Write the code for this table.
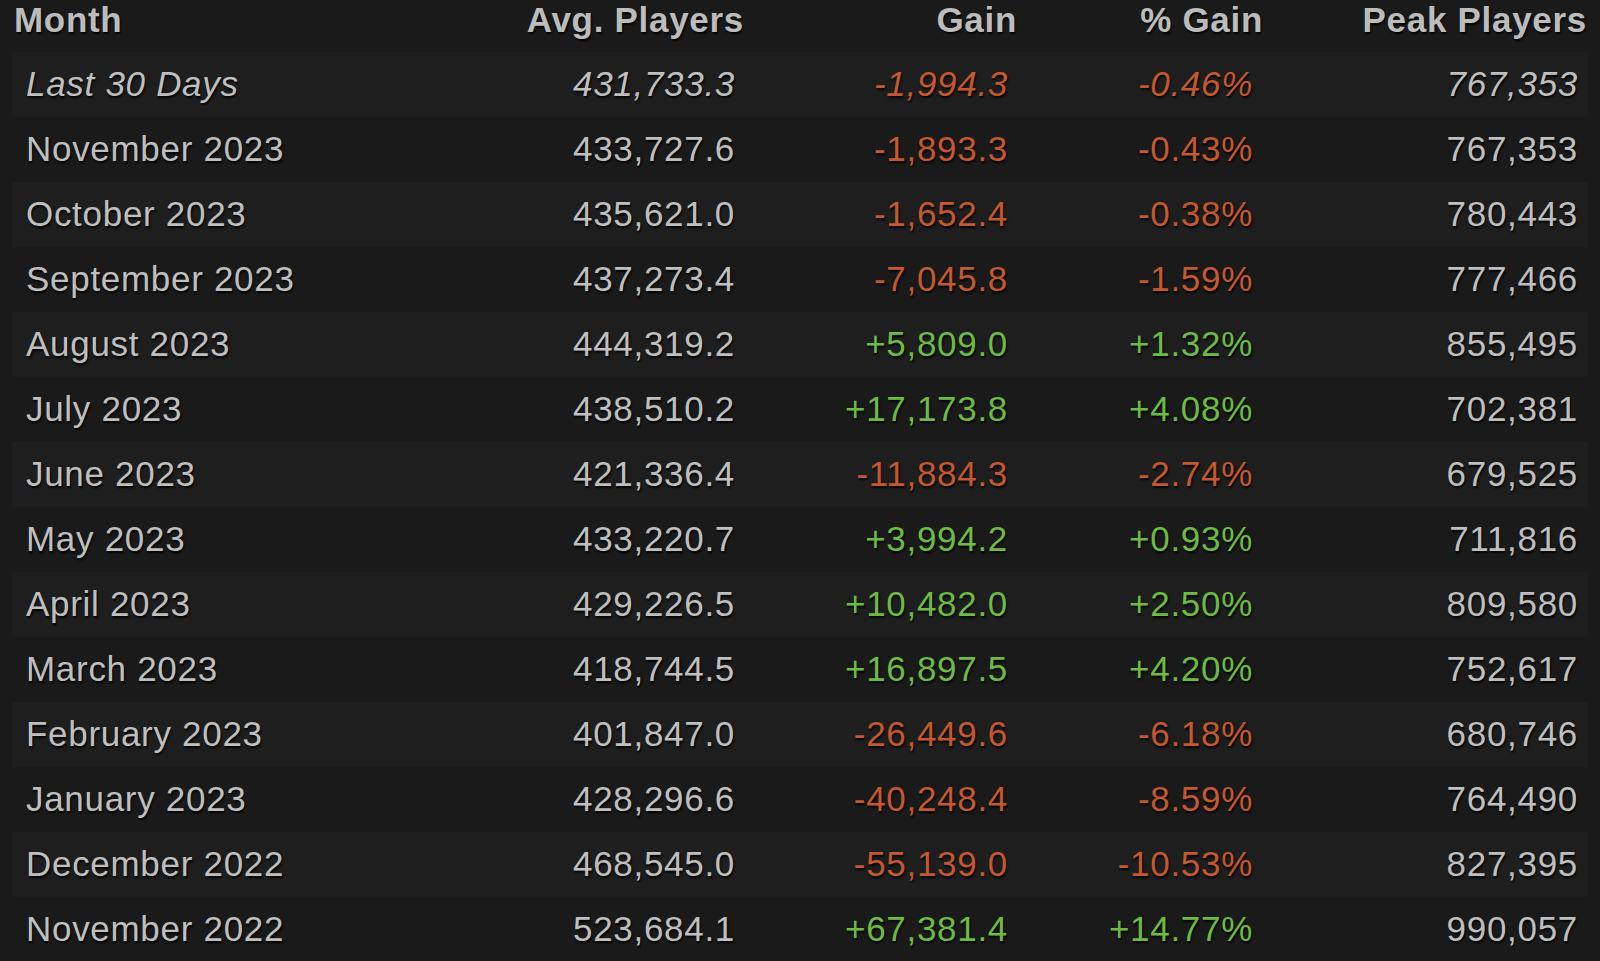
import React from 'react';

type Row = {
  month: string;
  avg: string;
  gain: string;
  pct: string;
  peak: string;
};

const rows: Row[] = [
  { month: 'Last 30 Days', avg: '431,733.3', gain: '-1,994.3', pct: '-0.46%', peak: '767,353' },
  { month: 'November 2023', avg: '433,727.6', gain: '-1,893.3', pct: '-0.43%', peak: '767,353' },
  { month: 'October 2023', avg: '435,621.0', gain: '-1,652.4', pct: '-0.38%', peak: '780,443' },
  { month: 'September 2023', avg: '437,273.4', gain: '-7,045.8', pct: '-1.59%', peak: '777,466' },
  { month: 'August 2023', avg: '444,319.2', gain: '+5,809.0', pct: '+1.32%', peak: '855,495' },
  { month: 'July 2023', avg: '438,510.2', gain: '+17,173.8', pct: '+4.08%', peak: '702,381' },
  { month: 'June 2023', avg: '421,336.4', gain: '-11,884.3', pct: '-2.74%', peak: '679,525' },
  { month: 'May 2023', avg: '433,220.7', gain: '+3,994.2', pct: '+0.93%', peak: '711,816' },
  { month: 'April 2023', avg: '429,226.5', gain: '+10,482.0', pct: '+2.50%', peak: '809,580' },
  { month: 'March 2023', avg: '418,744.5', gain: '+16,897.5', pct: '+4.20%', peak: '752,617' },
  { month: 'February 2023', avg: '401,847.0', gain: '-26,449.6', pct: '-6.18%', peak: '680,746' },
  { month: 'January 2023', avg: '428,296.6', gain: '-40,248.4', pct: '-8.59%', peak: '764,490' },
  { month: 'December 2022', avg: '468,545.0', gain: '-55,139.0', pct: '-10.53%', peak: '827,395' },
  { month: 'November 2022', avg: '523,684.1', gain: '+67,381.4', pct: '+14.77%', peak: '990,057' },
];

const cols = 'grid grid-cols-[488px_247px_273px_245px_325px]';

const App = () => {
  return (
    <div className="w-full min-h-screen bg-[#1a1a1a] px-[12px] font-['Liberation_Sans',Arial,sans-serif] [text-shadow:1px_2px_2px_rgba(0,0,0,0.85)]">
      {/* Header */}
      <div className={`${cols} h-[52px] items-start text-[35px] font-bold leading-[40px] tracking-[0.7px] text-[#bcbcbc]`}>
        <div className="pl-[2px]">Month</div>
        <div className="pr-[3px] text-right">Avg. Players</div>
        <div className="pr-[3px] text-right">Gain</div>
        <div className="pr-[2px] text-right">% Gain</div>
        <div className="pr-[3px] text-right">Peak Players</div>
      </div>

      {/* Rows */}
      {rows.map((row, index) => {
        const up = row.gain.startsWith('+');
        const color = up ? 'text-[#6dbb44]' : 'text-[#c4582f]';
        return (
          <div
            key={row.month}
            className={`${cols} h-[65px] items-center pb-[2px] text-[35px] leading-none tracking-[0.7px] ${
              index % 2 === 0 ? 'bg-[#1e1e1e]' : 'bg-[#1a1a1a]'
            } ${index === 0 ? 'italic' : ''}`}
          >
            <div className="pl-[14px] text-[#bfbfbf]">{row.month}</div>
            <div className="pr-[12px] text-right text-[#bfbfbf]">{row.avg}</div>
            <div className={`pr-[12px] text-right ${color}`}>{row.gain}</div>
            <div className={`pr-[12px] text-right ${color}`}>{row.pct}</div>
            <div className="pr-[12px] text-right text-[#bfbfbf]">{row.peak}</div>
          </div>
        );
      })}
    </div>
  );
};

export default App;
